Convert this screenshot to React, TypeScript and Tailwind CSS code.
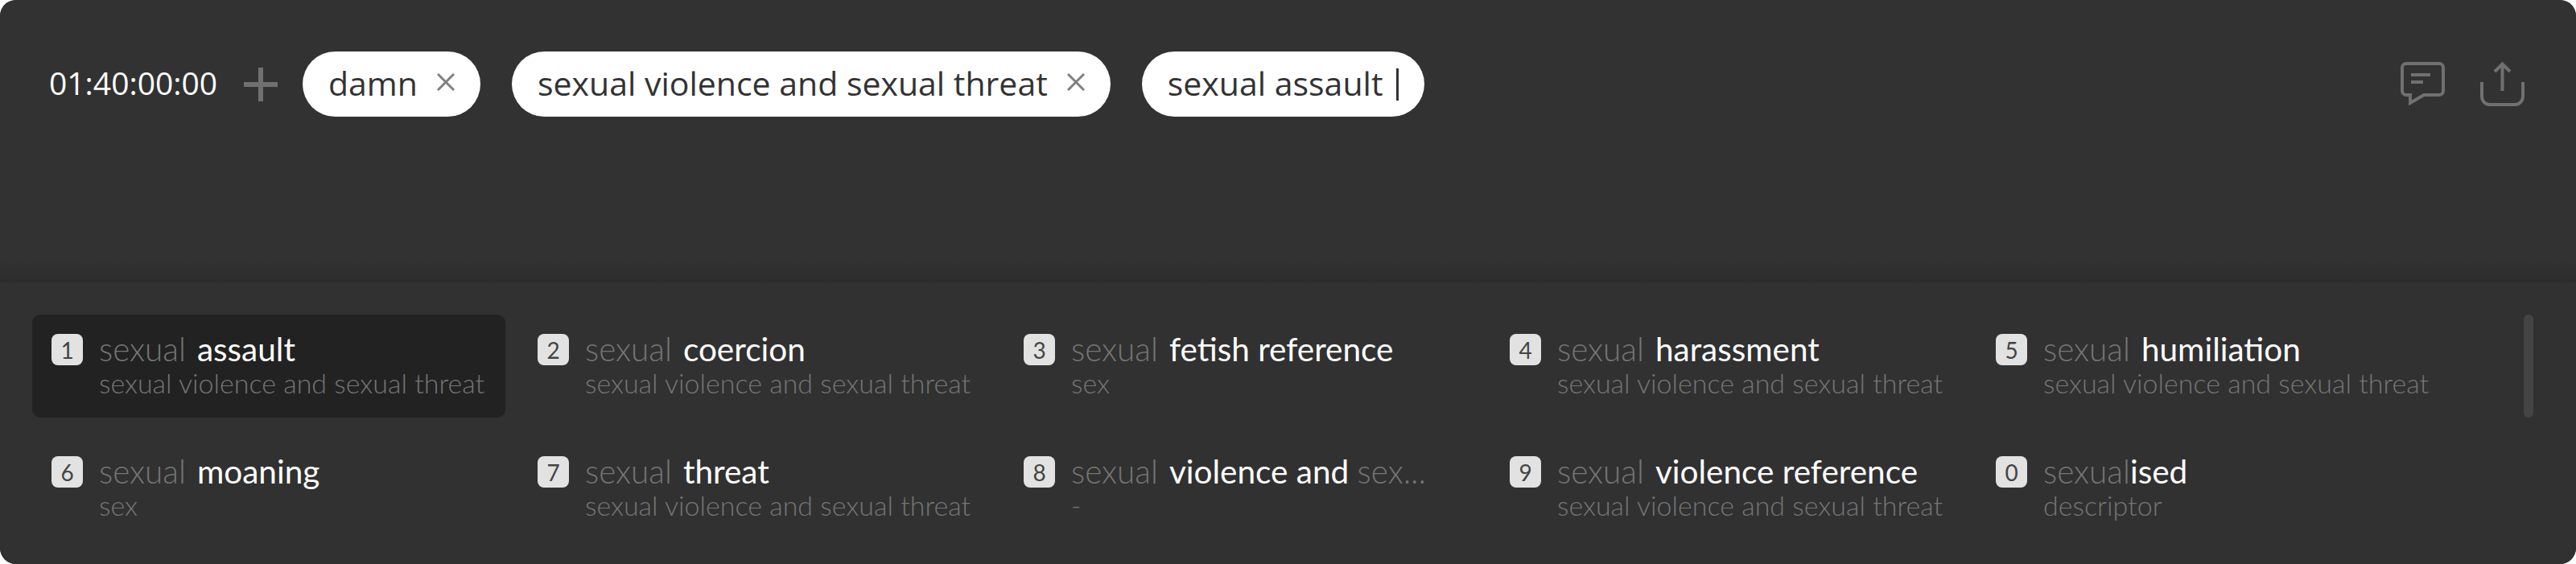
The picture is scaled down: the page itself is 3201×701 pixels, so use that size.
const items = [
  { key: '1', lead: 'sexual ', match: 'assault', sub: 'sexual violence and sexual threat', active: true },
  { key: '2', lead: 'sexual ', match: 'coercion', sub: 'sexual violence and sexual threat' },
  { key: '3', lead: 'sexual ', match: 'fetish reference', sub: 'sex' },
  { key: '4', lead: 'sexual ', match: 'harassment', sub: 'sexual violence and sexual threat' },
  { key: '5', lead: 'sexual ', match: 'humiliation', sub: 'sexual violence and sexual threat' },
  { key: '6', lead: 'sexual ', match: 'moaning', sub: 'sex' },
  { key: '7', lead: 'sexual ', match: 'threat', sub: 'sexual violence and sexual threat' },
  { key: '8', lead: 'sexual ', match: 'violence and ', tail: 'sex...', sub: '-' },
  { key: '9', lead: 'sexual ', match: 'violence reference', sub: 'sexual violence and sexual threat' },
  { key: '0', lead: 'sexual', match: 'ised', sub: 'descriptor' },
];

function Chip({ label }: { label: string }) {
  return (
    <div className="flex h-[81px] items-center rounded-full bg-white px-[32px] text-[41px] leading-[76px] text-[#333333]">
      <span className="pb-[4px]">{label}</span>
      <svg className="mb-[6px] ml-[24px] h-[22px] w-[22px]" viewBox="0 0 22 22" fill="none" stroke="#808080" strokeWidth="3">
        <path d="M1 1l20 20M21 1L1 21" />
      </svg>
    </div>
  );
}

export default function App() {
  return (
    <div className="h-[701px] w-full bg-white font-['Open_Sans',sans-serif]">
      <div className="flex h-full flex-col overflow-hidden rounded-[20px] bg-[#323232]">
        <div className="flex h-[351px] shrink-0 items-start justify-between bg-gradient-to-b from-[#323232] from-[92%] to-[#2c2c2c] pl-[61px] pr-[64px] pt-[64px]">
          <div className="flex items-center">
            <span className="w-[210px] whitespace-nowrap pb-[4px] text-[39px] leading-[77px] text-white">01:40:00:00</span>
            <svg className="ml-[32px] h-[42px] w-[42px]" viewBox="0 0 42 42" fill="none" stroke="#707070" strokeWidth="6">
              <path d="M21 0v42M0 21h42" />
            </svg>
            <div className="ml-[31px] flex gap-[39px]">
              <Chip label="damn" />
              <Chip label="sexual violence and sexual threat" />
              <div className="flex h-[81px] items-center rounded-full bg-white px-[32px] text-[41px] leading-[76px] text-[#333333]">
                <span className="pb-[4px]">sexual assault</span>
                <span className="ml-[16px] h-[40px] w-[3px] bg-[#333333]" />
              </div>
            </div>
          </div>
          <div className="flex gap-[44px] pt-[13px]">
            <svg className="h-[55px] w-[55px]" viewBox="0 0 55 55" fill="none" stroke="#707070" strokeWidth="4">
              <path d="M7 2h41a5 5 0 0 1 5 5v29a5 5 0 0 1-5 5H29L12 51V41H7a5 5 0 0 1-5-5V7a5 5 0 0 1 5-5Z" />
              <path d="M13 16h24M13 25h15" />
            </svg>
            <svg className="h-[55px] w-[55px]" viewBox="0 0 55 55" fill="none" stroke="#707070" strokeWidth="4">
              <path d="M2 25v18a10 10 0 0 0 10 10h31a10 10 0 0 0 10-10V25" />
              <path d="M27.5 36V3M18 12l9.5-9.5L37 12" />
            </svg>
          </div>
        </div>
        <div className="relative flex-1 rounded-t-[12px] bg-[#313131] pl-[40px] pt-[40px]">
          <div className="grid w-[3004px] grid-cols-[repeat(5,588px)] gap-x-[16px] gap-y-[24px] font-['Lato',sans-serif]">
            {items.map((item) => (
              <div
                key={item.key}
                className={`flex h-[128px] gap-[20px] rounded-[10px] pl-[24px] pt-[22px] ${item.active ? 'bg-[#222222]' : ''}`}
              >
                <div className="mt-[2px] flex h-[39px] w-[39px] shrink-0 items-center justify-center rounded-[8px] bg-[#e2e2e2] text-[28px] text-[#444444]">
                  {item.key}
                </div>
                <div className="min-w-0">
                  <div className="whitespace-pre text-[40.5px] leading-[42px] text-white">
                    <span className="font-light text-[#757575] [word-spacing:3px]">{item.lead}</span>
                    {item.match}
                    {item.tail && <span className="font-light text-[#757575]">{item.tail}</span>}
                  </div>
                  <div className="mt-[2px] text-[34px] font-light leading-[38px] text-[#757575]">{item.sub}</div>
                </div>
              </div>
            ))}
          </div>
          <div className="absolute left-[3136px] top-[40px] h-[128px] w-[12px] rounded-full bg-[#444444]" />
        </div>
      </div>
    </div>
  );
}
